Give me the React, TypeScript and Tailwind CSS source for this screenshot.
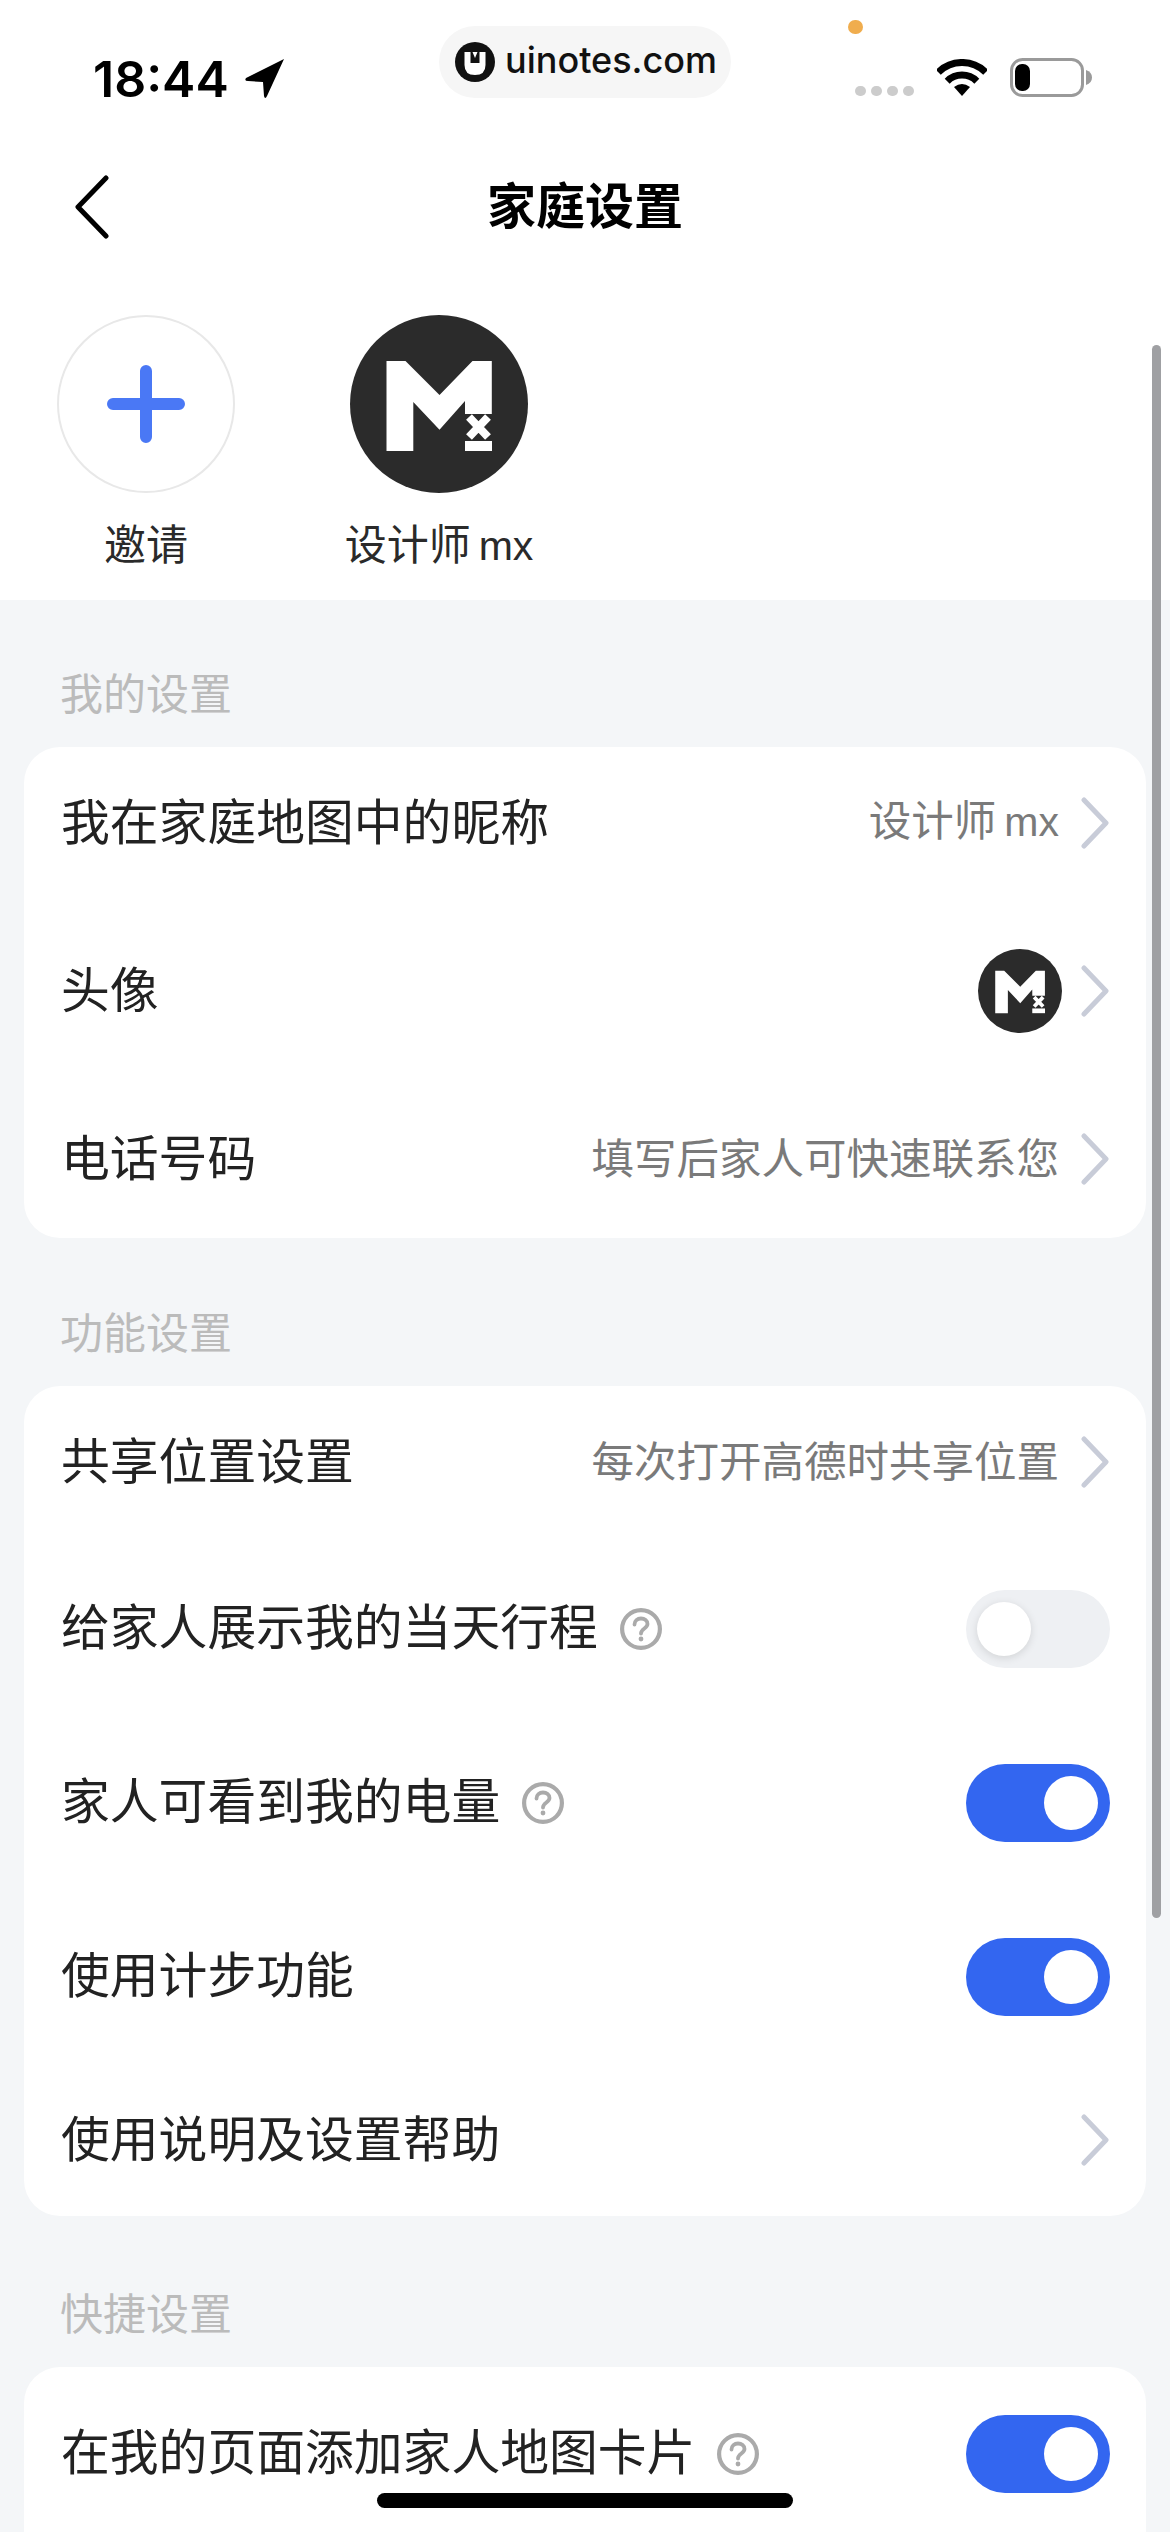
import React from "react";

const cjk = "font-['Noto_Sans_CJK_SC','Liberation_Sans',sans-serif]";

const MxAvatar: React.FC<{ className: string }> = ({ className }) => (
  <svg viewBox="0 0 178 178" className={className}>
    <circle cx="89" cy="89" r="89" fill="#2b2b2b" />
    <path
      d="M36.5 46H55.5L89.5 80L122.5 46H141.8V99H115V86L89.5 114.7L63.3 87V136H36.5Z"
      fill="#fff"
    />
    <path d="M119 102L138 122M138 102L119 122" stroke="#fff" strokeWidth="8" />
    <rect x="115" y="126" width="27" height="10" fill="#fff" />
  </svg>
);

const Chevron: React.FC = () => (
  <svg viewBox="0 0 28 52" className="w-[28px] h-[52px] shrink-0" fill="none">
    <path
      d="M3 3L25 26L3 49"
      stroke="#c8ccd8"
      strokeWidth="5"
      strokeLinecap="round"
      strokeLinejoin="round"
    />
  </svg>
);

const Help: React.FC = () => (
  <svg viewBox="0 0 42 42" className="w-[42px] h-[42px] shrink-0" fill="none">
    <circle cx="21" cy="21" r="18.9" stroke="#aaaaaa" strokeWidth="4.2" />
    <path
      d="M14.5 16.5C14.5 12.8 17.4 10.5 21 10.5C24.6 10.5 27.5 12.8 27.5 16C27.5 20.5 21 20.5 21 25.5"
      stroke="#aaaaaa"
      strokeWidth="3.8"
      strokeLinecap="round"
    />
    <circle cx="21" cy="31" r="2.4" fill="#aaaaaa" />
  </svg>
);

const Toggle: React.FC<{ on?: boolean }> = ({ on }) =>
  on ? (
    <div className="w-[144px] h-[78px] rounded-full bg-[#3366f0] flex items-center justify-end pr-[12px]">
      <div className="w-[54px] h-[54px] rounded-full bg-white" />
    </div>
  ) : (
    <div className="w-[144px] h-[78px] rounded-full bg-[#eef0f3] flex items-center pl-[11px]">
      <div className="w-[54px] h-[54px] rounded-full bg-white shadow-[0_2px_8px_rgba(0,0,0,0.12)]" />
    </div>
  );

// latin part of the nickname is narrower than the CJK font's own latin
const Nick: React.FC = () => (
  <>
    设计师
    <span className="ml-[8px] font-['Liberation_Sans',sans-serif] text-[41px]">mx</span>
  </>
);

const LinkRow: React.FC<{ label: string; value?: React.ReactNode; avatar?: boolean }> = ({
  label,
  value,
  avatar,
}) => (
  <div className="h-[152px] flex items-center justify-between pl-[37px] pr-[37px]">
    <span className="text-[48.8px] text-[#222222] leading-none mb-[8px]">{label}</span>
    <div className="flex items-center gap-[22px]">
      {value && <span className="text-[42.5px] text-[#7a7a7a] leading-none mb-[6px]">{value}</span>}
      {avatar && <MxAvatar className="w-[84px] h-[84px] mr-[-3px]" />}
      <Chevron />
    </div>
  </div>
);

const ToggleRow: React.FC<{ label: string; on?: boolean; help?: boolean }> = ({
  label,
  on,
  help = true,
}) => (
  <div className="h-[174px] flex items-center justify-between pl-[37px] pr-[36px]">
    <div className="flex items-center gap-[22px]">
      <span className="text-[48.8px] text-[#222222] leading-none mb-[10px]">{label}</span>
      {help && <Help />}
    </div>
    <Toggle on={on} />
  </div>
);

const SectionLabel: React.FC<{ children: React.ReactNode }> = ({ children }) => (
  <div className="h-[63px] leading-[57px] pl-[36px] mb-[21px] text-[43px] text-[#bbbbbb]">
    {children}
  </div>
);

export default function App() {
  return (
    <div className={`relative w-[1170px] h-[2532px] overflow-hidden bg-[#f4f6f8] ${cjk}`}>
      <div className="bg-white">
        {/* status bar */}
        <div className="h-[140px] flex items-start justify-between pl-[93px] pr-[78px] pt-[50px]">
          <div className="flex items-center gap-[16px] h-[56px] mt-[1px]">
            <span className="font-['Inter',sans-serif] font-semibold text-[50px] leading-none text-black">
              18:44
            </span>
            <svg viewBox="0 0 39 40" className="w-[39px] h-[40px]">
              <path d="M39 0L1 19Q-1 22 3 22L18 23L19 37Q20 41 22 37Z" fill="#000" />
            </svg>
          </div>
          <div className="flex items-center h-[56px] mt-[-1px]">
            <div className="flex gap-[5px] mt-[28px] mr-[23px]">
              {[0, 1, 2, 3].map((i) => (
                <div key={i} className="w-[11px] h-[10px] rounded-full bg-[#cccccc]" />
              ))}
            </div>
            <svg viewBox="0 0 50 37" className="w-[50px] h-[37px] mr-[23px]" fill="none">
              <path d="M1.3 13.3A33.5 33.5 0 0 1 48.7 13.3" stroke="#000" strokeWidth="7" />
              <path d="M10.2 22.2A21 21 0 0 1 39.8 22.2" stroke="#000" strokeWidth="7" />
              <path d="M25 37L17 28Q25 22 33 28Z" fill="#000" />
            </svg>
            <svg viewBox="0 0 82 39" className="w-[82px] h-[39px]" fill="none">
              <rect x="1.5" y="1.5" width="71" height="36" rx="11" fill="#fff" stroke="#9a9a9a" strokeWidth="3" />
              <rect x="5" y="6" width="15" height="27" rx="7" fill="#000" />
              <path d="M76 12Q82 14 82 19.5Q82 25 76 27Z" fill="#9a9a9a" />
            </svg>
          </div>
        </div>

        {/* nav */}
        <div className="relative h-[132px] flex items-center justify-center">
          <svg viewBox="0 0 36 64" className="absolute left-[74px] top-[35px] w-[36px] h-[64px]" fill="none">
            <path
              d="M32 3L4 32L32 61"
              stroke="#000"
              strokeWidth="5"
              strokeLinecap="round"
              strokeLinejoin="round"
            />
          </svg>
          <span className="text-[49px] font-bold text-black leading-none mb-[8px]">家庭设置</span>
        </div>

        {/* members */}
        <div className="h-[328px] pt-[43px] pl-[57px] flex gap-[115px]">
          <div className="w-[178px] flex flex-col items-center">
            <div className="w-[178px] h-[178px] rounded-full border-2 border-[#e8e8e8] flex items-center justify-center">
              <svg viewBox="0 0 78 78" className="w-[78px] h-[78px]" fill="none">
                <path d="M39 6V72M6 39H72" stroke="#4a78f5" strokeWidth="12" strokeLinecap="round" />
              </svg>
            </div>
            <span className="mt-[17px] text-[42px] leading-[63px] text-[#2a2a2a]">邀请</span>
          </div>
          <div className="w-[178px] flex flex-col items-center">
            <MxAvatar className="w-[178px] h-[178px]" />
            <span className="mt-[17px] text-[42px] leading-[63px] text-[#2a2a2a] whitespace-nowrap">
              <Nick />
            </span>
          </div>
        </div>
      </div>

      <div className="px-[24px]">
        <section className="pt-[63px]">
          <SectionLabel>我的设置</SectionLabel>
          <div className="bg-white rounded-[36px] flex flex-col gap-[16px] pb-[3px]">
            <LinkRow label="我在家庭地图中的昵称" value={<Nick />} />
            <LinkRow label="头像" avatar />
            <LinkRow label="电话号码" value="填写后家人可快速联系您" />
          </div>
        </section>

        <section className="pt-[64px]">
          <SectionLabel>功能设置</SectionLabel>
          <div className="bg-white rounded-[36px]">
            <LinkRow label="共享位置设置" value="每次打开高德时共享位置" />
            <div className="mt-[4px]">
              <ToggleRow label="给家人展示我的当天行程" />
              <ToggleRow label="家人可看到我的电量" on />
              <ToggleRow label="使用计步功能" on help={false} />
            </div>
            <LinkRow label="使用说明及设置帮助" />
          </div>
        </section>

        <section className="pt-[67px]">
          <SectionLabel>快捷设置</SectionLabel>
          <div className="bg-white rounded-t-[36px]">
            <ToggleRow label="在我的页面添加家人地图卡片" on />
          </div>
        </section>
      </div>

      {/* watermark pill */}
      <div className="absolute left-[439px] top-[26px] w-[292px] h-[72px] rounded-full bg-[#f6f6f6] flex items-center pl-[16px] gap-[10px]">
        <svg viewBox="0 0 40 40" className="w-[40px] h-[40px] shrink-0">
          <circle cx="20" cy="20" r="20" fill="#111" />
          <path d="M9.5 10V23Q9.5 33 20 33Q30.5 33 30.5 23V10H24.5V21H15.5V10Z" fill="#fff" />
          <path d="M17.5 10H22.5L20 16Z" fill="#fff" />
        </svg>
        <span className="font-['Inter',sans-serif] font-medium text-[36px] leading-none text-[#111111] mt-[-4px]">
          uinotes.com
        </span>
      </div>
      <div className="absolute left-[848px] top-[20px] w-[15px] h-[14px] rounded-full bg-[#f0ad4e]" />

      {/* scroll bar */}
      <div className="absolute left-[1152px] top-[345px] w-[9px] h-[1573px] rounded-full bg-[#9fa0a3]" />

      {/* home indicator */}
      <div className="absolute left-[377px] top-[2493px] w-[416px] h-[15px] rounded-full bg-black" />
    </div>
  );
}
